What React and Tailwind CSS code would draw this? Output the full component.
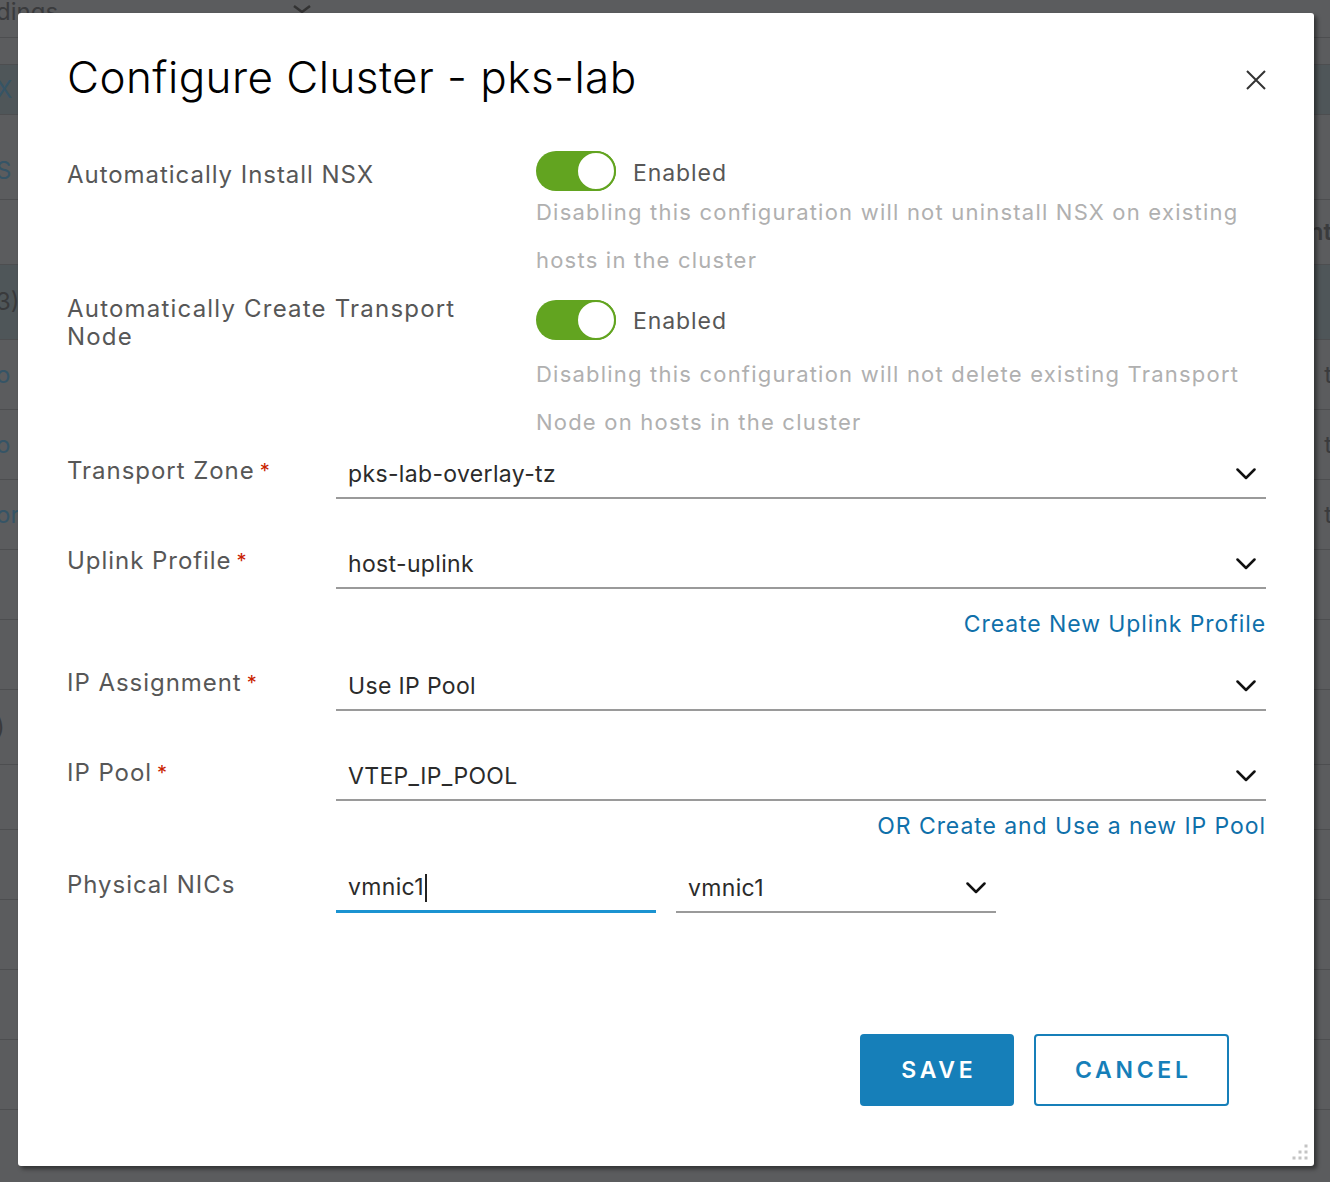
import React from "react";

const font = { fontFamily: "Inter, 'Noto Sans', sans-serif" };

function Chevron() {
  return (
    <svg width="20" height="12" viewBox="0 0 20 12" fill="none" className="shrink-0">
      <path d="M1.5 1.5 L10 10 L18.5 1.5" stroke="#111" strokeWidth="2.5" strokeLinecap="round" strokeLinejoin="round" />
    </svg>
  );
}

function Toggle() {
  return (
    <div className="flex h-10 w-20 items-center justify-end rounded-full bg-[#62a420]">
      <div className="h-10 w-10 rounded-full border-2 border-[#62a420] bg-white" />
    </div>
  );
}

function Label({ children, star }) {
  return (
    <div className="text-[24px] leading-[28px] tracking-[0.04em] text-[#575757]">
      {children}
      {star && <span className="ml-[5px] align-top text-[20px] text-[#c92100]">*</span>}
    </div>
  );
}

function Select({ value, className = "" }) {
  return (
    <div className={"flex h-12 items-center justify-between border-b-2 border-[#9a9a9a] pl-3 pr-[10px] " + className}>
      <span className="text-[23px] tracking-[0.015em] text-[#2b2b2b]">{value}</span>
      <Chevron />
    </div>
  );
}

function SelectRow({ label, value, top }) {
  return (
    <div className={"flex " + top}>
      <div className="w-[269px] shrink-0 pt-[6px]">
        <Label star>{label}</Label>
      </div>
      <Select value={value} className="flex-1" />
    </div>
  );
}

const bgRows = [
  { h: 38, left: "dings", header: true },
  { h: 27 },
  { h: 50, left: "X", hl: true, blue: true },
  { h: 85, left: "S", blue: true, align: "pb-[10px] items-end" },
  { h: 65, right: "nt", bold: true },
  { h: 75, left: "3)", hl: true },
  { h: 70, left: "o", right: "t", blue: true },
  { h: 70, left: "o", right: "t", blue: true },
  { h: 70, left: "or", right: "t", blue: true },
  { h: 70 },
  { h: 70 },
  { h: 75, left: ")" },
  { h: 65 },
  { h: 70 },
  { h: 70 },
  { h: 70 },
  { h: 70 },
];

export default function App() {
  return (
    <div className="relative h-[1182px] w-[1330px] overflow-hidden bg-[#5b5c5e]" style={font}>
      {/* background page (dimmed) */}
      <div className="flex flex-col">
        {bgRows.map((r, i) => (
          <div
            key={i}
            style={{ height: r.h }}
            className={
              "flex justify-between border-b border-[#4d4e50] " +
              (r.hl ? "bg-[#4f5659] " : "") +
              (r.align ? r.align : "items-center")
            }
          >
            <span
              className={
                "-ml-[4px] text-[24px] " +
                (r.header ? "-mt-[14px] text-[#3a3b3d]" : r.blue ? "text-[#355466]" : "text-[#393a3c]")
              }
            >
              {r.left || ""}
            </span>
            <span className={"-mr-[2px] text-[24px] " + (r.bold ? "font-semibold text-[#3a3b3d]" : "text-[#3a3b3d]")}>
              {r.right || ""}
            </span>
          </div>
        ))}
      </div>
      <div className="absolute left-[292px] top-[4px]">
        <svg width="20" height="10" viewBox="0 0 20 10">
          <path d="M2 2 L10 8 L18 2" stroke="#333" strokeWidth="2.5" fill="none" />
        </svg>
      </div>

      {/* modal */}
      <div className="absolute left-[18px] top-[13px] h-[1153px] w-[1296px] rounded-[3px] bg-white pl-[49px] pr-[48px] shadow-[3px_3px_4px_rgba(0,0,0,0.45)]">
        <div className="pt-[38px] text-[44px] font-light leading-[52px] tracking-[0.01em] text-[#000]">Configure Cluster - pks-lab</div>
        <button className="absolute right-[48px] top-[57px] h-5 w-5">
          <svg width="20" height="20" viewBox="0 0 20 20">
            <path d="M1 1 L19 19 M19 1 L1 19" stroke="#333" strokeWidth="2" />
          </svg>
        </button>

        {/* Toggle row 1 */}
        <div className="mt-[48px] flex">
          <div className="w-[469px] shrink-0 pt-[10px]">
            <Label>Automatically Install NSX</Label>
          </div>
          <div className="flex-1">
            <div className="flex items-center gap-[17px]">
              <Toggle />
              <span className="mt-[4px] text-[23px] tracking-[0.04em] text-[#575757]">Enabled</span>
            </div>
            <div className="-mt-[3px] whitespace-nowrap text-[22px] leading-[48px] tracking-[0.055em] text-[#b0b0b0]">
              Disabling this configuration will not uninstall NSX on existing
              <br />
              hosts in the cluster
            </div>
          </div>
        </div>

        {/* Toggle row 2 */}
        <div className="mt-[16px] flex">
          <div className="w-[469px] shrink-0 -mt-[5px]">
            <div className="text-[24px] leading-[28px] tracking-[0.05em] text-[#575757]">
              Automatically Create Transport
              <br />
              Node
            </div>
          </div>
          <div className="flex-1">
            <div className="flex items-center gap-[17px]">
              <Toggle />
              <span className="mt-[2px] text-[23px] tracking-[0.04em] text-[#575757]">Enabled</span>
            </div>
            <div className="mt-[10px] whitespace-nowrap text-[22px] leading-[48px] tracking-[0.055em] text-[#b0b0b0]">
              Disabling this configuration will not delete existing Transport
              <br />
              Node on hosts in the cluster
            </div>
          </div>
        </div>

        <SelectRow label="Transport Zone" value="pks-lab-overlay-tz" top="mt-[5px]" />
        <SelectRow label="Uplink Profile" value="host-uplink" top="mt-[42px]" />
        <div className="mt-[21px] text-right text-[23px] leading-[28px] tracking-[0.04em] text-[#0f70aa]">Create New Uplink Profile</div>
        <SelectRow label="IP Assignment" value="Use IP Pool" top="mt-[25px]" />
        <SelectRow label="IP Pool" value="VTEP_IP_POOL" top="mt-[42px]" />
        <div className="mt-[11px] text-right text-[23px] leading-[28px] tracking-[0.04em] text-[#0f70aa]">OR Create and Use a new IP Pool</div>

        <div className="mt-[25px] flex">
          <div className="w-[269px] shrink-0 pt-[6px]">
            <Label>Physical NICs</Label>
          </div>
          <div className="flex h-12 w-[320px] items-center border-b-[3px] border-[#1b93d1] pl-3">
            <span className="text-[23px] tracking-[0.015em] text-[#2b2b2b]">vmnic1</span>
            <span className="ml-[1px] inline-block h-[28px] w-[2px] bg-[#222]" />
          </div>
          <Select value="vmnic1" className="ml-5 w-[320px]" />
        </div>

        <div className="mt-[121px] flex justify-end gap-5 pr-[37px]">
          <button className="flex h-[72px] w-[154px] items-center justify-center rounded-[4px] bg-[#167fb9] pl-[0.16em] text-[23px] font-semibold tracking-[0.16em] text-white">
            SAVE
          </button>
          <button className="flex h-[72px] w-[195px] items-center justify-center rounded-[4px] border-2 border-[#167fb9] bg-white pl-[0.16em] text-[23px] font-semibold tracking-[0.16em] text-[#167fb9]">
            CANCEL
          </button>
        </div>

        <svg className="absolute bottom-[4px] right-[4px]" width="20" height="20" viewBox="0 0 20 20">
          {[
            [16, 4],
            [10, 10],
            [16, 10],
            [4, 16],
            [10, 16],
            [16, 16],
          ].map(([x, y], i) => (
            <rect key={i} x={x - 1.5} y={y - 1.5} width="3" height="3" fill="#c4c4c4" />
          ))}
        </svg>
      </div>
    </div>
  );
}
